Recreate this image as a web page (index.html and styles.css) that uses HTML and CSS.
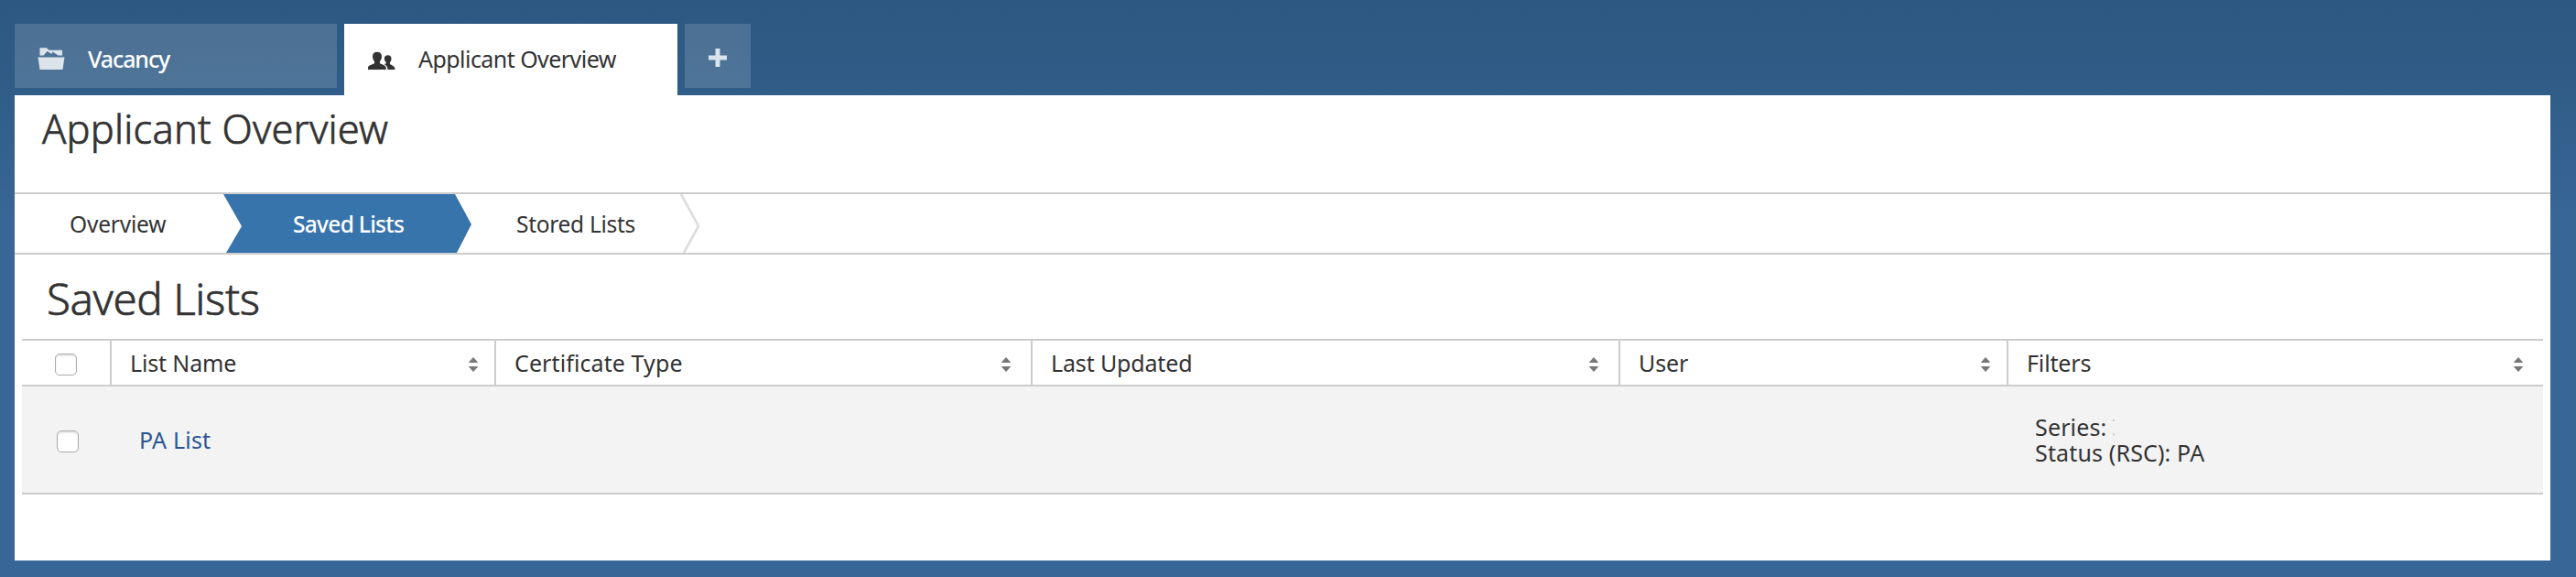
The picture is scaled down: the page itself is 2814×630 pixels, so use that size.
FILE: index.html
```html
<!DOCTYPE html>
<html lang="en">
<head>
<meta charset="utf-8">
<title>Applicant Overview</title>
<link rel="stylesheet" href="styles.css">
</head>
<body>
<nav class="tabs">
  <a class="tab tab-vacancy">
    <svg class="tab-icon" width="30" height="26" viewBox="0 0 30 26"><path fill="#dbe3eb" d="M2.500 1.200H10L12.500 3.800H27V9.500H22.500L16.500 5.500L15.500 8L10.500 5L6.500 9.500H2.500Z M0.500 11.500H29.500L27.500 25H2.500Z"/></svg>
    <span>Vacancy</span>
  </a>
  <a class="tab tab-active">
    <svg class="tab-icon" width="30" height="26" viewBox="0 0 30 26"><path fill="#333" d="M0 25V22.500C.3 20.800 2 20.200 6 18.700C7.200 18.200 7.500 17 6.800 15.800C5.500 14.200 5 12.500 5 10.500C5 7.300 6.800 5.700 10 5.700S15 7.300 15 10.500C15 12.500 14.500 14.200 13.200 15.800C12.500 17 12.800 18.200 14 18.700C18 20.200 19.500 21 19.700 23V25Z M21.500 25C21.400 22 20.500 20.600 17.600 19.100L19.500 18.400C20 17.900 19.800 17.200 19.300 16.600C18.300 15.500 17.900 14.500 17.900 13C17.900 10.600 19.300 9.300 21.700 9.300S25.500 10.600 25.500 13C25.500 14.700 25 15.800 24.200 16.900C23.600 17.900 23.800 18.900 24.800 19.500C27.500 20.900 29.300 21.500 29.500 25Z"/></svg>
    <span>Applicant Overview</span>
  </a>
  <a class="tab tab-add"><svg width="20" height="20" viewBox="0 0 20 20"><path fill="#dbe3eb" d="M7.500 0H12.500V7.500H20V12.500H12.500V20H7.500V12.500H0V7.500H7.500Z"/></svg></a>
</nav>
<main class="panel">
  <h1 class="page-title">Applicant Overview</h1>
  <div class="steps">
    <a class="step step-first">Overview</a>
    <a class="step step-current">Saved Lists</a>
    <a class="step step-last">Stored Lists</a>
    <svg class="chevron" width="24" height="64" viewBox="0 0 24 64"><path fill="none" stroke="#dcdcdc" stroke-width="2.600" d="M1.500 -1L21 35L5 64"/></svg>
  </div>
  <h2 class="section-title">Saved Lists</h2>
  <div class="table">
    <div class="row head">
      <div class="cell check"><input type="checkbox" class="box"></div>
      <div class="cell"><span>List Name</span><svg class="sort" width="10" height="16" viewBox="0 0 10 16"><path d="M5 .5L9.500 5.500H.5Z M.5 10.500H9.500L5 15.500Z"/></svg></div>
      <div class="cell wide cert"><span>Certificate Type</span><svg class="sort" width="10" height="16" viewBox="0 0 10 16"><path d="M5 .5L9.500 5.500H.5Z M.5 10.500H9.500L5 15.500Z"/></svg></div>
      <div class="cell wide"><span>Last Updated</span><svg class="sort" width="10" height="16" viewBox="0 0 10 16"><path d="M5 .5L9.500 5.500H.5Z M.5 10.500H9.500L5 15.500Z"/></svg></div>
      <div class="cell"><span>User</span><svg class="sort" width="10" height="16" viewBox="0 0 10 16"><path d="M5 .5L9.500 5.500H.5Z M.5 10.500H9.500L5 15.500Z"/></svg></div>
      <div class="cell wide"><span>Filters</span><svg class="sort" width="10" height="16" viewBox="0 0 10 16"><path d="M5 .5L9.500 5.500H.5Z M.5 10.500H9.500L5 15.500Z"/></svg></div>
    </div>
    <div class="row item">
      <div class="cell check"><input type="checkbox" class="box"></div>
      <div class="cell"><a class="link">PA List</a></div>
      <div class="cell"></div>
      <div class="cell"></div>
      <div class="cell"></div>
      <div class="cell filters">
        <div class="series">Series:<svg class="remnant" width="2" height="18" viewBox="0 0 2 18"><path fill="#bbb" d="M0 0H1.500V2H0Z M0.500 15H1.500V18H0.500Z"/></svg></div>
        <div>Status (RSC): PA</div>
      </div>
    </div>
  </div>
</main>
</body>
</html>
```
FILE: styles.css
```css
* { box-sizing: border-box; }
body {
  margin: 0;
  height: 630px;
  padding: 26px 28px 18px 16px;
  overflow: hidden;
  display: flex;
  flex-direction: column;
  background: linear-gradient(#2d5881 0, #2e5a84 60px, #386696 240px);
  font: 25px/32px "Noto Sans", sans-serif;
  color: #333;
}
.tabs { display: flex; align-items: flex-start; gap: 8px; height: 78px; }
.tab {
  display: flex;
  height: 70px;
  padding: 22px 0 0 25px;
  background: rgba(255, 255, 255, .15);
  color: #fff;
}
.tab-icon { margin: 3px 25px 0 0; }
.tab-vacancy { width: 352px; letter-spacing: -1.100px; font-weight: 500; }
.tab-active { width: 364px; height: 78px; padding-left: 26px; background: #fff; color: #333; letter-spacing: -.55px; }
.tab-add { width: 72px; padding: 27px 0 0 26px; }
.panel { flex: 1; background: #fff; }
.page-title {
  margin: 0;
  height: 106px;
  padding: 7px 0 0 30px;
  font-size: 43.400px;
  line-height: 60px;
  font-weight: 300;
  -webkit-text-stroke: .7px #333;
  letter-spacing: .2px;
}
.steps {
  display: flex;
  height: 68px;
  border: solid #ccc;
  border-width: 2px 0;
  font-size: 24.500px;
  line-height: 65px;
  letter-spacing: -.2px;
}
.step-first { width: 226px; padding-left: 60px; }
.step-current {
  width: 273px;
  padding-left: 78px;
  background: #3874ac;
  color: #fff;
  font-weight: 500;
  letter-spacing: -.7px;
  clip-path: polygon(0 0, 255px 0, 273px 33px, 257px 64px, 5px 64px, 22px 35px, 2px 0);
}
.step-last { width: 227px; padding-left: 49px; letter-spacing: -.3px; }
.section-title {
  margin: 0;
  height: 92px;
  padding: 18px 0 0 35px;
  font-size: 47.500px;
  line-height: 60px;
  font-weight: 300;
  -webkit-text-stroke: .7px #333;
  letter-spacing: -.4px;
}
.table { margin: 0 8px; border-top: 2px solid #ccc; letter-spacing: -.15px; }
.row { display: grid; grid-template-columns: 98px 420px 586px 642px 424px 584px; border-bottom: 2px solid #ccc; }
.head { height: 50px; }
.item { height: 118px; background: #f3f3f3; }
.cell { display: flex; align-items: center; justify-content: space-between; padding: 0 18px 0 20px; }
.head .cell { border-right: 2px solid #ccc; }
.head .cell:last-child { border-right: 0; }
.head .wide { padding-right: 22px; }
.head .cert { letter-spacing: .1px; }
.head .cell.check { padding: 4px 0 0 36px; }
.item .cell.check { padding: 4px 0 0 38px; }
.sort { margin-top: 4px; fill: #777; stroke: #777; stroke-width: 1px; stroke-linejoin: round; overflow: visible; }
.box {
  appearance: none;
  margin: 0;
  width: 24px;
  height: 24px;
  border: 1.500px solid #aaa;
  border-radius: 5px;
  background: #fff;
  box-shadow: inset 0 2px 2px rgba(0, 0, 0, .1);
}
.link { margin-left: 10px; color: #2a5594; letter-spacing: .2px; }
.item .filters { flex-direction: column; align-items: flex-start; justify-content: center; padding-left: 29px; line-height: 28px; letter-spacing: .15px; }
.series { display: flex; align-items: center; }
.remnant { margin: 2px 0 0 7px; }
```
